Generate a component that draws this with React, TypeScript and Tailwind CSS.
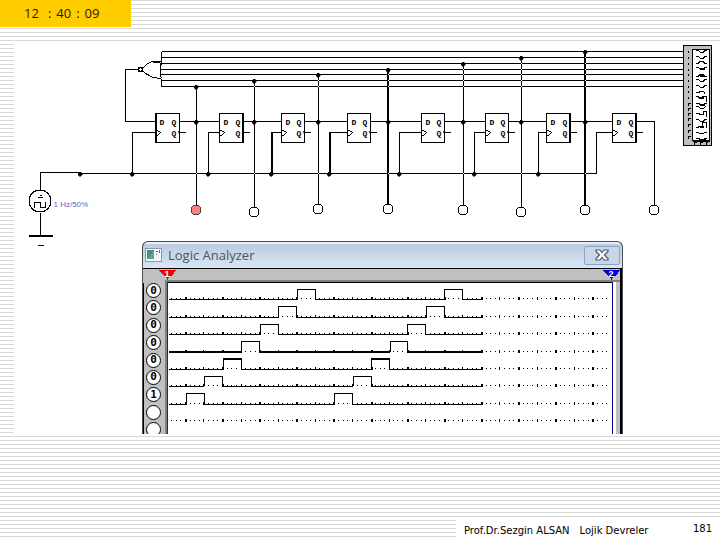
const BUS_LINES = [51, 57, 63, 69, 74, 80, 86];
const CLOCK_Y = 173;

// left and right edge of each flip-flop, clock branch, output wire and lamp
const STAGES = [
  { left: 155, right: 179, clk: 132, out: 196, tap: 86, lamp: 210, on: true },
  { left: 219, right: 243, clk: 208, out: 254, tap: 80, lamp: 212 },
  { left: 281, right: 304, clk: 271, out: 318, tap: 74, lamp: 209, thickClk: true },
  { left: 347, right: 370, clk: 329, out: 388, tap: 69, lamp: 209, thickClk: true, thickOut: true },
  { left: 421, right: 444, clk: 399, out: 463, tap: 63, lamp: 210 },
  { left: 485, right: 508, clk: 474, out: 521, tap: 57, lamp: 212 },
  { left: 546, right: 570, clk: 538, out: 585, tap: 51, lamp: 210, thickOut: true },
  { left: 612, right: 636, clk: 596, out: 654, tap: 121, lamp: 210 },
];

const CHANNELS = ["0", "0", "0", "0", "0", "0", "1", "", ""];

const TRACES = [
  { base: 299, high: 289, pulses: [297, 445] },
  { base: 317, high: 306, pulses: [278, 427] },
  { base: 334, high: 324, pulses: [260, 408] },
  { base: 352, high: 341, pulses: [241, 390], thick: true },
  { base: 369, high: 358, pulses: [223, 371], thickTop: true },
  { base: 386, high: 376, pulses: [204, 353] },
  { base: 404, high: 393, pulses: [186, 334] },
  { base: 421, high: 0, pulses: [] },
];

const PULSE = 18;
const TRACE_END = 481;

// sample ticks, every fourth taller, every eighth also wider
const TICKS = Array.from({ length: 95 }, (_, i) => ({
  x: Math.round(171 + i * 4.64),
  major: i % 4 === 3,
  wide: i % 8 === 3,
}));

function Dot({ x, y }: { x: number; y: number }) {
  return <path d={`M${x - 1} ${y - 2}h2v1h1v2h-1v1h-2v-1h-1v-2h1z`} fill="#000" stroke="#000" strokeWidth="0.500" />;
}

function FlipFlop({ left, right }: { left: number; right: number }) {
  return (
    <g>
      <rect x={left} y="113" width={right - left} height="29" fill="#fff" />
      {left === 155 && <path d="M156 113v29" />}
      {right - left === 24 && left !== 155 && <path d={`M${right - 1} 113v29`} />}
      <path d={`M${left} 130h2l3 2l-3 3h-2M${right} 132h6`} />
      <g fill="#000" stroke="none" fontSize="8" fontWeight="bold" fontFamily="'Liberation Mono', monospace">
        <text x={left + 4} y="124">D</text>
        <text x={right - 8} y="124">Q</text>
        <text x={right - 8} y="135">Q'</text>
      </g>
    </g>
  );
}

function Circuit() {
  return (
    <svg
      viewBox="13.5 41.5 706 199"
      className="block w-full overflow-visible"
      fill="none"
      stroke="#000"
      shapeRendering="crispEdges"
      role="img"
      aria-label="Ring counter circuit"
    >
      {BUS_LINES.map((y) => (
        <path key={y} d={`M${y > 61 && y < 78 ? 159 : 161} ${y}H683`} />
      ))}

      {/* NOR gate and feedback */}
      <path d="M161 51V61M161 78V86" />
      <path d="M161 61h-9l-5 2l-5 5M142 70l3 3l4 2l3 2l9 1M161 61v2l-1 2v10l1 3" />
      <path d="M152 61h7" strokeWidth="2" />
      <path d="M137 69H125V121H155" />
      <circle cx="140" cy="69" r="2" fill="#fff" strokeWidth="1.500" />

      {/* clock line */}
      <path d="M40 189V172H79M77 173H596V132H612" />

      {STAGES.map((s, i) => {
        const next = STAGES[i + 1];
        return (
          <g key={s.left}>
            {i < 7 && <path d={`M${s.left} 132H${s.clk}V173`} />}
            {s.thickClk && <path d={`M${s.clk + 1} 132V173`} />}
            <path d={`M${s.right} 121H${next ? next.left : s.out}`} />
            <path d={`M${s.out} ${s.tap}V${s.lamp - 5}`} />
            {s.thickOut && <path d={`M${s.out - 1} ${s.tap}V${s.lamp - 5}`} />}
            {next &&
              [...BUS_LINES.filter((y) => y > s.tap), CLOCK_Y].map((y) => (
                <rect key={y} x={s.out - 0.5} y={y - 0.5} width="1" height="1" fill="#fff" stroke="none" />
              ))}
            {next && <Dot x={s.out - 0.5} y={s.tap + 0.5} />}
            {next && <Dot x={s.out - 0.5} y={121.5} />}
            {next && <Dot x={s.clk - 0.5} y={173.5} />}
            <circle
              cx={s.out - 0.5}
              cy={s.lamp - 0.5}
              r="5"
              fill={s.on ? "#ff7f7f" : "#fff"}
              stroke={s.on ? "#444" : "#000"}
            />
            <FlipFlop left={s.left} right={s.right} />
          </g>
        );
      })}
      <Dot x={79.5} y={173.5} />

      {/* clock source and ground */}
      <circle cx="39.5" cy="200.5" r="11" fill="#fff" />
      <path d="M34 207V202H40V207H45V201M37 197h5M39 195h2M40 212V235M28 235H52M28 236H52M37 245H43" />
      <text x="53" y="206" fill="#6464c8" stroke="none" fontSize="8" fontFamily="'Liberation Sans', sans-serif">
        1 Hz/50%
      </text>

      {/* analyzer block */}
      <rect x="683" y="45" width="28" height="100" fill="#c0c0c0" />
      <rect x="692" y="49" width="17" height="91" fill="#fff" />
      <path d="M692 141h17M694 144v-3l3 2M700 144v-3l3 2M706 144v-3l2 2" />
      {[51, 57, 63, 69, 74, 80, 86, 91, 97, 103, 108, 113, 118, 124, 130, 136].map((y) => (
        <path key={y} d={y < 102 ? `M688 ${y - 1}v2` : `M688 ${y - 1}v3M688 ${y}h2`} />
      ))}
      <path d="M695 50h3l2 2h3l1-2h2M695 56h3l2 2h3l1-2h2M695 63h3l1-2h4l1 2h2M695 67h3l2 2h3l1-2h2M695 76h3l1-2h4l1 2h2M695 79h3l2 2h3l1-2h2M695 85h3l2 2h3l1-2h2M695 92h3l2-1h3l2 3M695 96h3l1 2h3v-2h4v5M695 103h3l2 1h3l1-1h2M695 106h3l2 2h3l2-2M695 113h3l2 1h3v-3h3v5M695 119h3l2 2h3l1-2h2M695 127h3v-1h4v-4h4v5M695 132h3l1 1h4l1-1h2M695 138h3l2 1h3l1-1h2" />
      <path d="M699 68h5M699 75h5M699 97h4M699 104h5M699 126h4M698 139h7" strokeWidth="2" />
    </svg>
  );
}

function Plot() {
  return (
    <svg
      viewBox="167.5 282.5 445 151"
      className="block w-full"
      fill="none"
      stroke="#000"
      shapeRendering="crispEdges"
      role="img"
      aria-label="Channel waveforms"
    >
      {TRACES.map(({ base, high, pulses, thick, thickTop }) => {
        const d =
          "M168 " + base + pulses.map((x) => `H${x}V${high}H${x + PULSE}V${base}`).join("") + "H" + TRACE_END;
        return (
          <g key={base}>
            {pulses.length > 0 && <path d={d} />}
            {thick && <path d={`M168 351H${pulses[0]}M259 351H${pulses[1]}M408 351H481`} />}
            {thickTop && pulses.map((x) => <path key={x} d={`M${x} ${high + 1}h${PULSE}`} />)}
            {TICKS.map((t) => (
              <rect
                key={t.x}
                x={t.x - 0.5}
                y={base - (t.major ? 2.5 : 1.5)}
                width={t.wide ? 2 : 1}
                height={t.major ? 3 : 1}
                fill="#000"
                stroke="none"
              />
            ))}
          </g>
        );
      })}
    </svg>
  );
}

function Marker({ label, color }: { label: string; color: string }) {
  return (
    <svg viewBox="0 0 17 11" className="block h-[11px] w-[17px]" shapeRendering="crispEdges">
      <path d="M0 0h17l-2 3l-3 3h-2l-1 4h-1l-1-4h-2l-3-3z" fill={color} />
      <text
        x="8"
        y="7"
        textAnchor="middle"
        fill="#fff"
        fontSize="9"
        fontWeight="bold"
        fontFamily="'Liberation Sans', sans-serif"
      >
        {label}
      </text>
    </svg>
  );
}

function LogicAnalyzer() {
  return (
    <section className="mr-[97px] ml-[128px] overflow-hidden rounded-t-md border-x border-t border-[#4a4f57] bg-black">
      <header className="flex h-[26px] items-center border-t-2 border-[#e6edf5] bg-linear-to-b from-[#bccbdd] to-[#d9e7f5] px-0.5 pb-0.5">
        <svg viewBox="0 0 17 14" className="mr-1.5 h-[14px] w-[17px]" aria-hidden="true">
          <rect x="0.5" y="0.5" width="16" height="13" fill="#f4f8fa" stroke="#8a98a8" />
          <rect x="2" y="2" width="7" height="9" fill="#3f8f8a" />
          <path d="M2 11l7-9v9z" fill="#5aa58e" />
          <path d="M11 3.5h2M11 6.5h1M14.5 2v3" stroke="#567" />
        </svg>
        <h1 className="font-['Open_Sans',sans-serif] text-[13px] leading-5 text-[#4b5563]">Logic Analyzer</h1>
        <button
          type="button"
          aria-label="Close"
          className="ml-auto flex h-[19px] w-[36px] items-center justify-center rounded-xs border border-[#8ea3c0] bg-[#c9d8e8]"
        >
          <svg viewBox="0 0 14 12" className="h-3 w-3.5" aria-hidden="true">
            <path
              d="M1 1h4l2 2.5L9 1h4v1.500L9.500 6L13 9.500V11H9L7 8.500L5 11H1V9.500L4.500 6L1 2.500z"
              fill="#fff"
              stroke="#4c5663"
              strokeWidth="1.200"
            />
          </svg>
        </button>
      </header>

      <div className="mr-0.5 border-t border-black bg-[#c0c0c0]">
        <div className="flex h-[11px] justify-between pt-px pl-4">
          <Marker label="1" color="#f00000" />
          <Marker label="2" color="#0000e0" />
        </div>
        <div className="flex h-[154px] overflow-hidden">
          <ul className="mt-[3px] flex h-[154px] w-[22px] shrink-0 flex-col items-center justify-between border-l border-black pr-0.5">
            {CHANNELS.map((value, i) => (
              <li
                key={i}
                className="flex h-[15px] w-[15px] shrink-0 items-center justify-center rounded-full border border-black bg-white font-['DejaVu_Sans_Mono',monospace] text-[11px] leading-3 font-bold text-black"
              >
                {value}
              </li>
            ))}
          </ul>
          <div className="flex min-w-0 grow border-t-2 border-l-2 border-[#808080]">
            <div className="min-w-0 grow border-t border-l border-t-black border-l-[#900000] bg-white">
              <Plot />
            </div>
            <div className="w-1 shrink-0 border-l border-[#000080] bg-white" />
            <div className="w-1 shrink-0 bg-[#c0c0c0]" />
          </div>
        </div>
      </div>
    </section>
  );
}

export default function App() {
  return (
    <div className="flex min-h-screen flex-col bg-white bg-[linear-gradient(#d8d8d8_1px,transparent_1px)] bg-[length:4px_4px]">
      <header className="flex h-[27px] w-[131px] gap-[5px] bg-[#ffcc00] pt-[3px] pl-6 font-['Open_Sans',sans-serif] text-[13px] leading-5 font-medium text-[#2b1a00]">
        <span className="mr-1">12</span>
        <span>:</span>
        <span>40</span>
        <span>:</span>
        <span>09</span>
      </header>

      <main className="mt-[15px] ml-[14px] bg-white">
        <Circuit />
        <LogicAnalyzer />
      </main>

      <footer className="mt-auto flex h-[22px] w-[264px] items-center justify-between self-end bg-white px-2 font-['DejaVu_Sans',sans-serif] text-[10px] leading-4 text-black">
        <p className="flex gap-2.5 pt-1">
          <span>Prof.Dr.Sezgin ALSAN</span>
          <span>Lojik Devreler</span>
        </p>
        <span>181</span>
      </footer>
    </div>
  );
}
